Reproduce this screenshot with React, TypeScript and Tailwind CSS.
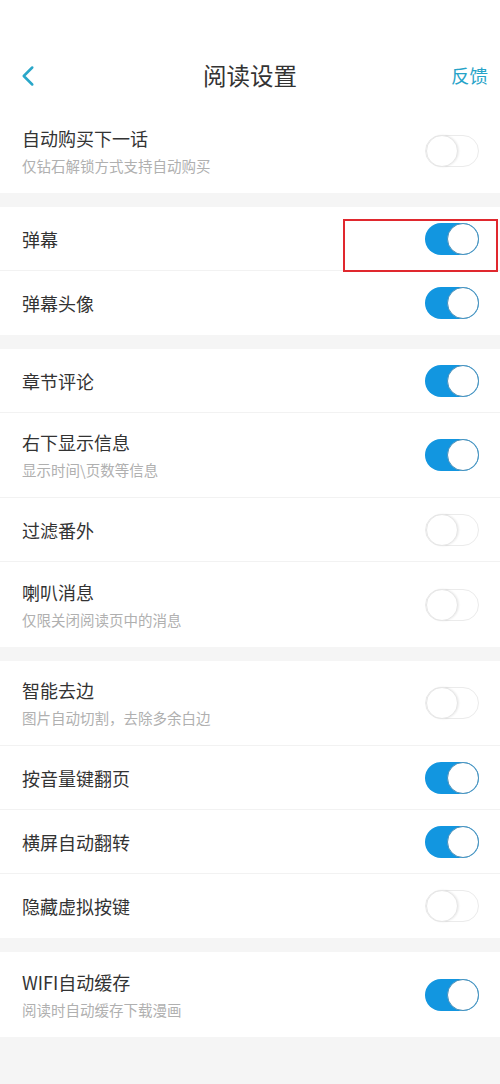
import { ChevronLeft } from "lucide-react";

type Item = { title: string; sub?: string; on: boolean; marked?: boolean };

const groups: Item[][] = [
  [{ title: "自动购买下一话", sub: "仅钻石解锁方式支持自动购买", on: false }],
  [
    { title: "弹幕", on: true, marked: true },
    { title: "弹幕头像", on: true },
  ],
  [
    { title: "章节评论", on: true },
    { title: "右下显示信息", sub: "显示时间\\页数等信息", on: true },
    { title: "过滤番外", on: false },
    { title: "喇叭消息", sub: "仅限关闭阅读页中的消息", on: false },
  ],
  [
    { title: "智能去边", sub: "图片自动切割，去除多余白边", on: false },
    { title: "按音量键翻页", on: true },
    { title: "横屏自动翻转", on: true },
    { title: "隐藏虚拟按键", on: false },
  ],
  [{ title: "WIFI自动缓存", sub: "阅读时自动缓存下载漫画", on: true }],
];

function Toggle({ on }: { on: boolean }) {
  return (
    <div
      className={`flex h-[32px] w-[54px] items-center rounded-full ${
        on ? "justify-end bg-[#1296e0]" : "justify-start border border-[#ebebeb] bg-white"
      }`}
    >
      <div
        className={`h-[32px] w-[32px] rounded-full bg-white ${
          on ? "border border-[#4a8fb8]" : "border border-[#e6e6e6] shadow-[1px_0_2px_rgba(0,0,0,0.08)]"
        }`}
      />
    </div>
  );
}

function Row({ item, last }: { item: Item; last: boolean }) {
  return (
    <div className={`relative flex items-center justify-between pl-[22px] pr-[21px] ${item.sub ? "h-[85px]" : "h-[64px]"} ${last ? "" : "border-b border-[#f2f2f2]"}`}>
      <div className="flex flex-col">
        <span className="text-[18px] leading-[24px] text-[#333]">{item.title}</span>
        {item.sub && <span className="mt-[6px] text-[14.5px] leading-[20px] text-[#b0b0b0]">{item.sub}</span>}
      </div>
      <Toggle on={item.on} />
      {item.marked && (
        <div className="absolute left-[343px] top-[12px] h-[53px] w-[155px] border-2 border-[#e0282e]" />
      )}
    </div>
  );
}

export default function App() {
  return (
    <div
      className="flex min-h-[1084px] w-[500px] flex-col bg-[#f5f5f5]"
      style={{ fontFamily: '"Noto Sans CJK SC", "Noto Sans", sans-serif' }}
    >
      <div className="bg-white pt-[44px]">
        <div className="relative flex h-[64px] items-center justify-center">
          <ChevronLeft className="absolute left-[11px] top-[15px] text-[#2aa7c9]" size={34} strokeWidth={1.8} />
          <span className="text-[23.5px] text-[#333]">阅读设置</span>
          <span className="absolute right-[12px] top-[18px] text-[18.5px] text-[#27a3c8]">反馈</span>
        </div>
      </div>
      {groups.map((g, gi) => (
        <div key={gi} className={`bg-white ${gi === 0 ? "" : "mt-[14px]"}`}>
          {g.map((item, i) => (
            <Row key={item.title} item={item} last={i === g.length - 1} />
          ))}
        </div>
      ))}
    </div>
  );
}
